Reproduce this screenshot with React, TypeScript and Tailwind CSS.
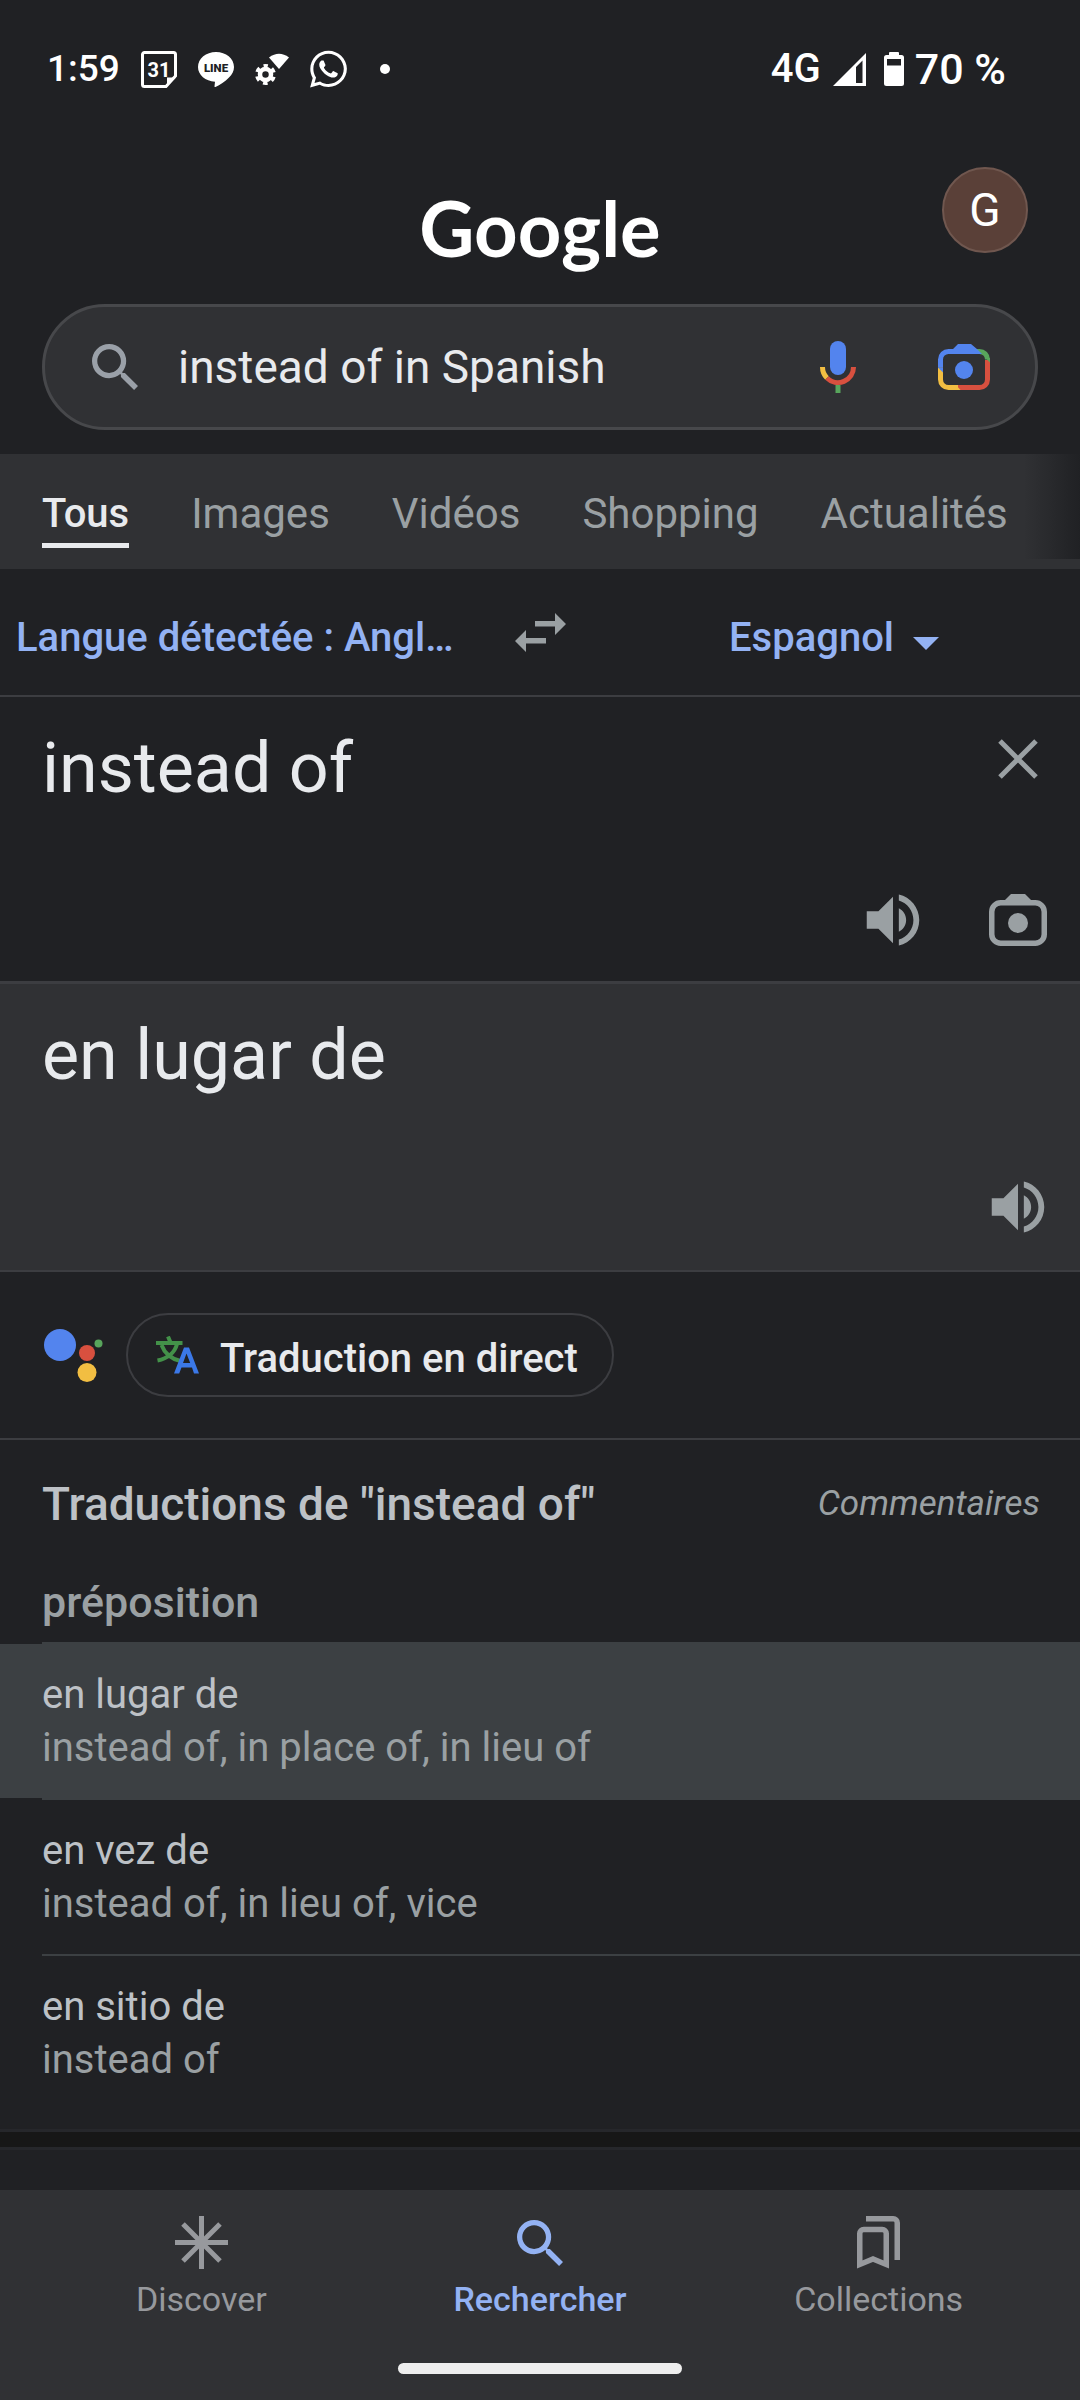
import React from "react";
import { FaWhatsapp } from "react-icons/fa";

function CalendarIcon() {
  return (
    <svg viewBox="0 0 36 37" className="h-[37px] w-9" aria-hidden="true">
      <path d="M3.500 1.500h29a2 2 0 0 1 2 2v21.500l-9.500 10.500H3.500a2 2 0 0 1-2-2v-30a2 2 0 0 1 2-2z" fill="none" stroke="#fff" strokeWidth="3" />
      <path d="M26 35v-8.500h9z" fill="#fff" />
      <text x="18" y="26" textAnchor="middle" fontFamily="Roboto, sans-serif" fontWeight="700" fontSize="20" fill="#fff">31</text>
    </svg>
  );
}

function LineIcon() {
  return (
    <svg viewBox="0 0 36 35" className="h-[35px] w-9" aria-hidden="true">
      <path d="M18 0c10 0 18 6.600 18 15 0 4-2 7.500-5 10.500-4 4-9 7.500-13.500 9.500-1.200.4-1-.5-.9-1.500l.4-3.700C7.500 29.200 0 23 0 15 0 6.600 8 0 18 0z" fill="#fff" />
      <text x="18" y="19.500" textAnchor="middle" fontFamily="Roboto, sans-serif" fontWeight="900" fontSize="11.500" fill="#202124">LINE</text>
    </svg>
  );
}

function GearWifiIcon() {
  return (
    <svg viewBox="0 0 34 34" className="h-[34px] w-[34px]" aria-hidden="true">
      <path d="M14 5.500Q24 -2 34 5.500L24 17z" fill="#fff" />
      <circle cx="10.500" cy="22.500" r="5.500" fill="none" stroke="#fff" strokeWidth="4.500" />
      <circle cx="10.500" cy="22.500" r="8.500" fill="none" stroke="#fff" strokeWidth="4" strokeDasharray="4.450 4.450" strokeDashoffset="2.200" transform="rotate(-90 10.500 22.500)" />
    </svg>
  );
}

function SignalIcon() {
  return (
    <svg viewBox="0 0 33 33" className="h-[33px] w-[33px]" aria-hidden="true">
      <path fillRule="evenodd" d="M0 33L33 0v33zM23 14v16h6.500V7.500z" fill="#fff" />
    </svg>
  );
}

function BatteryIcon() {
  return (
    <svg viewBox="0 0 20 34" className="h-[34px] w-5" aria-hidden="true">
      <path fillRule="evenodd" d="M6 0h8a1 1 0 0 1 1 1v2h2.500A2.500 2.500 0 0 1 20 5.500v26a2.500 2.500 0 0 1-2.500 2.500h-15A2.500 2.500 0 0 1 0 31.500v-26A2.500 2.500 0 0 1 2.500 3H5V1a1 1 0 0 1 1-1zM3 7v6.500h14V7z" fill="#fff" />
    </svg>
  );
}

function SearchIcon() {
  return (
    <svg viewBox="3 3 17.490 17.490" className="size-[46px]" fill="currentColor" aria-hidden="true">
      <path d="M15.500 14h-.79l-.28-.27A6.471 6.471 0 0 0 16 9.500 6.500 6.500 0 1 0 9.500 16c1.610 0 3.090-.59 4.230-1.570l.27.28v.79l5 4.990L20.490 19l-4.990-5zm-6 0C7.010 14 5 11.990 5 9.500S7.010 5 9.500 5 14 7.010 14 9.500 11.990 14 9.500 14z" />
    </svg>
  );
}

function MicIcon() {
  return (
    <svg viewBox="0 0 36 52" className="h-[52px] w-9" fill="none" strokeWidth="5" aria-hidden="true">
      <rect x="10" y="0" width="16" height="34" rx="8" fill="#5384ee" />
      <path d="M2.500 26A15.500 15.500 0 0 0 7 37" stroke="#f2be42" />
      <path d="M7 37A15.500 15.500 0 0 0 33.500 26" stroke="#d8503f" />
      <path d="M18 44v8" stroke="#58a55c" />
    </svg>
  );
}

function LensIcon() {
  return (
    <svg viewBox="0 0 52 46" className="h-[46px] w-[52px]" fill="none" strokeWidth="5" aria-hidden="true">
      <path d="M20 43.500H10.500a8 8 0 0 1-8-8V23.500" stroke="#f2be42" />
      <path d="M49.500 16v19.500a8 8 0 0 1-8 8H20" stroke="#d8503f" />
      <path d="M18 41l4.500 5H18z" fill="#f2be42" />
      <path d="M38 7.500h3.500a8 8 0 0 1 8 8" stroke="#58a55c" />
      <path d="M46.500 13l5.500 5.500V14z" fill="#58a55c" />
      <path d="M2.500 23.500v-8a8 8 0 0 1 8-8H37" stroke="#5384ee" />
      <path d="M0 23.500h5v5zM14 6l6-6h13l6.500 5.500L44 10H14z" fill="#5384ee" />
      <circle cx="26" cy="26" r="9" fill="#5384ee" />
    </svg>
  );
}

function SwapIcon() {
  return (
    <svg viewBox="0 0 51 39" className="h-[39px] w-[51px]" fill="currentColor" aria-hidden="true">
      <path d="M20 8h20V0l11 11-11 11v-8.500H20zM11 17v8h20v5.500H11V39L0 28z" />
    </svg>
  );
}

function CloseIcon() {
  return (
    <svg viewBox="0 0 40 40" className="size-10" fill="none" stroke="currentColor" strokeWidth="5" aria-hidden="true">
      <path d="M2 2l36 36M38 2L2 38" />
    </svg>
  );
}

function SpeakerIcon() {
  return (
    <svg viewBox="0 0 24 24" className="size-[70px]" fill="currentColor" aria-hidden="true">
      <path d="M3 9v6h4l5 5V4L7 9H3zm13.500 3c0-1.770-1.020-3.290-2.500-4.030v8.050c1.480-.73 2.500-2.250 2.500-4.020zM14 3.230v2.060c2.890.86 5 3.540 5 6.710s-2.110 5.850-5 6.710v2.060c4.010-.91 7-4.490 7-8.770s-2.990-7.860-7-8.770z" />
    </svg>
  );
}

function CameraIcon() {
  return (
    <svg viewBox="0 0 58 52" className="h-[52px] w-[58px]" aria-hidden="true">
      <rect x="2.750" y="8.750" width="52.500" height="40.500" rx="9" fill="none" stroke="currentColor" strokeWidth="5.500" />
      <path d="M15 7l7-7h14l7 7v3H15z" fill="currentColor" />
      <circle cx="29" cy="29" r="10" fill="currentColor" />
    </svg>
  );
}

function AssistantIcon() {
  return (
    <svg viewBox="0 0 59 53" className="h-[53px] w-[59px]" aria-hidden="true">
      <circle cx="16" cy="16" r="16" fill="#5384ee" />
      <circle cx="43" cy="24" r="8" fill="#d8503f" />
      <circle cx="43" cy="43.500" r="9.500" fill="#f2be42" />
      <circle cx="54.500" cy="14.500" r="4" fill="#58a55c" />
    </svg>
  );
}

function TranslateIcon() {
  return (
    <svg viewBox="0 0 43 38" className="h-[38px] w-[43px]" fill="none" strokeWidth="4" aria-hidden="true">
      <path d="M12 .5l2.500 6M0 7h26.500M5.500 9c3 8 10 14 19 16M21 8c-2 8-9 14.500-19.500 16.500" stroke="#439149" />
      <path fillRule="evenodd" d="M28 11.500h5L43 37.500h-5l-2-6H25.500l-2.300 6H18zM30.500 17.500L27 27h7.200z" fill="#3b78e7" />
    </svg>
  );
}

function DiscoverIcon() {
  return (
    <svg viewBox="0 0 53 53" className="size-[53px]" fill="none" stroke="currentColor" strokeWidth="5" aria-hidden="true">
      <path d="M26.500 0v53M0 26.500h53M8 8l37 37M45 8L8 45" />
    </svg>
  );
}

function CollectionsIcon() {
  return (
    <svg viewBox="0 0 43 53" className="h-[53px] w-[43px]" fill="none" stroke="currentColor" strokeWidth="5.500" aria-hidden="true">
      <path d="M2.750 48.500v-31a4 4 0 0 1 4-4h18.500a4 4 0 0 1 4 4v31L16 43z" />
      <path d="M9 2.750h27.250a4 4 0 0 1 4 4V44" />
    </svg>
  );
}

const tabs = ["Tous", "Images", "Vidéos", "Shopping", "Actualités"];

const translations = [
  { term: "en lugar de", meanings: "instead of, in place of, in lieu of", selected: true },
  { term: "en vez de", meanings: "instead of, in lieu of, vice", selected: false },
  { term: "en sitio de", meanings: "instead of", selected: false },
];

const navItems = [
  { label: "Discover", icon: <DiscoverIcon />, active: false },
  { label: "Rechercher", icon: <SearchIcon />, active: true },
  { label: "Collections", icon: <CollectionsIcon />, active: false },
];

function IconButton({ label, children }: { label: string; children: React.ReactNode }) {
  return (
    <button type="button" aria-label={label} className="flex size-[78px] shrink-0 items-center justify-center text-[#9aa0a3]">
      {children}
    </button>
  );
}

export default function App() {
  return (
    <div className="flex min-h-screen flex-col bg-[#202124] font-[Roboto,sans-serif] text-[#e8eaed]">
      <div className="flex h-[138px] items-center justify-between pl-[47px] pr-[74px] font-medium text-white">
        <div className="flex items-center gap-[21px]">
          <span className="text-[37px]">1:59</span>
          <CalendarIcon />
          <LineIcon />
          <GearWifiIcon />
          <FaWhatsapp className="h-[42px] w-[37px]" />
          <span className="ml-3 size-[10px] rounded-full bg-white" />
        </div>
        <div className="flex items-center">
          <span className="mr-3 text-[40px]">4G</span>
          <SignalIcon />
          <span className="ml-[18px] mr-[11px]"><BatteryIcon /></span>
          <span className="text-[43px]">70 %</span>
        </div>
      </div>

      <header className="grid h-36 grid-cols-[1fr_auto_1fr] items-center">
        <h1 className="col-start-2 self-end pb-4 font-[Lato,sans-serif] text-[76px] font-bold leading-none text-white">Google</h1>
        <button type="button" aria-label="Compte" className="mr-[52px] flex size-[86px] items-center justify-center justify-self-end rounded-full border-2 border-[#70574f] bg-[#5a4038] text-[46px] leading-none text-white">
          G
        </button>
      </header>

      <form className="mx-[42px] mb-6 mt-[22px] flex h-[126px] items-center rounded-full border-[3px] border-[#47484b] bg-[#303134] pl-[47px] pr-[45px]">
        <span className="text-[#9aa0a8]"><SearchIcon /></span>
        <input aria-label="Recherche" defaultValue="instead of in Spanish" className="ml-10 min-w-0 flex-1 bg-transparent text-[46px] leading-[60px] outline-none" />
        <button type="button" aria-label="Recherche vocale" className="mr-[82px]"><MicIcon /></button>
        <button type="button" aria-label="Google Lens"><LensIcon /></button>
      </form>

      <nav aria-label="Types de résultats" className="relative h-[115px] overflow-hidden bg-[#303134]">
        <div className="flex gap-[62px] pl-[42px] pt-9">
          {tabs.map((tab, i) => (
            <a
              key={tab}
              href="#"
              className={
                i === 0
                  ? "border-b-[5px] border-[#e8eaed] pb-[5px] text-[40px] font-medium leading-[48px] text-[#e8eaed]"
                  : "pb-[5px] text-[42px] leading-[48px] text-[#9aa0a3]"
              }
            >
              {tab}
            </a>
          ))}
        </div>
        <div className="absolute right-0 top-0 h-[105px] w-14 bg-gradient-to-r from-transparent to-[#202124]" />
      </nav>

      <div className="grid h-32 grid-cols-[4fr_1fr_4fr] items-center border-b-2 border-[#3c3d41] text-[40px] font-medium text-[#93b2f3]">
        <button type="button" className="truncate pl-4 pt-[11px] text-left">Langue détectée : Angl…</button>
        <button type="button" aria-label="Inverser les langues" className="justify-self-center text-[#9aa0a3]"><SwapIcon /></button>
        <div className="relative flex items-center justify-self-center pr-3 pt-[11px]">
          <select aria-label="Langue cible" className="appearance-none bg-transparent pr-11 outline-none" defaultValue="es">
            <option value="es">Espagnol</option>
          </select>
          <svg viewBox="0 0 26 13" className="pointer-events-none absolute right-3 mt-3 h-[13px] w-[26px]" fill="currentColor" aria-hidden="true">
            <path d="M0 0h26L13 13z" />
          </svg>
        </div>
      </div>

      <section aria-label="Texte source" className="border-b-[3px] border-[#3c3d41] pb-[22px] pl-[42px] pr-[23px]">
        <div className="flex min-h-[184px] items-start">
          <textarea aria-label="Texte à traduire" rows={1} defaultValue="instead of" className="mt-[29px] min-w-0 flex-1 resize-none overflow-hidden bg-transparent text-[70px] leading-[84px] outline-none" />
          <div className="mt-[23px]"><IconButton label="Effacer"><CloseIcon /></IconButton></div>
        </div>
        <div className="flex justify-end gap-[47px]">
          <IconButton label="Écouter"><SpeakerIcon /></IconButton>
          <IconButton label="Appareil photo"><CameraIcon /></IconButton>
        </div>
      </section>

      <section aria-label="Traduction" className="border-b-2 border-[#3c3d41] bg-[#303134] pb-6 pl-[42px] pr-[23px]">
        <p className="min-h-[184px] pt-[29px] text-[70px] leading-[84px]">en lugar de</p>
        <div className="flex justify-end">
          <IconButton label="Écouter la traduction"><SpeakerIcon /></IconButton>
        </div>
      </section>

      <div className="flex items-center gap-[23px] border-b-2 border-[#3c3d41] py-[41px] pl-11">
        <AssistantIcon />
        <button type="button" className="flex h-[84px] items-center gap-[21px] rounded-full border-2 border-[#3c3d41] pl-7 pr-[34px] text-[40px] font-medium">
          <TranslateIcon />
          <span className="pt-2">Traduction en direct</span>
        </button>
      </div>

      <section>
        <div className="flex h-32 items-center justify-between pl-[42px] pr-10">
          <h2 className="text-[46px] font-medium text-[#bdc1c6]">Traductions de "instead of"</h2>
          <a href="#" className="text-[35px] italic text-[#9aa0a3]">Commentaires</a>
        </div>
        <h3 className="pb-[6px] pl-[42px] text-[43px] font-medium leading-[68px] text-[#9aa0a3]">préposition</h3>
        <ul className="text-[40px] leading-[53px]">
          {translations.map(({ term, meanings, selected }) => (
            <li key={term}>
              <div className="ml-[42px] border-t-2 border-[#3c4043]" />
              <div className={selected ? "bg-[#3c4043] py-6 pl-[42px]" : "py-6 pl-[42px]"}>
                <p className="text-[#bdc1c6]">{term}</p>
                <p className="text-[#9aa0a3]">{meanings}</p>
              </div>
            </li>
          ))}
        </ul>
      </section>

      <div className="mb-10 mt-[19px] h-[21px] border-y-[3px] border-[#26272b] bg-[#171717]" />

      <footer className="mt-auto bg-[#303134] pb-[26px] pt-[26px]">
        <nav aria-label="Navigation principale" className="grid grid-cols-3 px-8">
          {navItems.map(({ label, icon, active }) => (
            <a
              key={label}
              href="#"
              className={
                active
                  ? "flex flex-col items-center gap-[10px] text-[34px] font-medium leading-10 text-[#93b2f3]"
                  : "flex flex-col items-center gap-[10px] text-[34px] leading-10 text-[#97999d]"
              }
            >
              <span className="flex h-[53px] items-center">{icon}</span>
              {label}
            </a>
          ))}
        </nav>
        <div className="mx-auto mt-11 h-[11px] w-[284px] rounded-full bg-[#eeeeee]" />
      </footer>
    </div>
  );
}
